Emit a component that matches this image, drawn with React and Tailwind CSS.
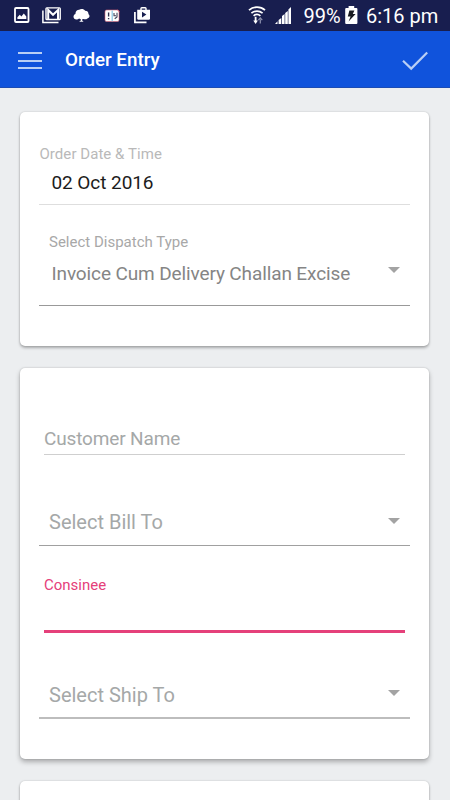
import React from "react";

function StatusBar() {
  return (
    <div className="flex h-[31px] shrink-0 items-start bg-[#181e4f] text-white">
      {/* Notifications */}
      <svg className="ml-[14px] mt-[7px] h-4 w-4 shrink-0" viewBox="0 0 16 16" fill="none">
        <rect x="1" y="1" width="13.5" height="14" rx="1" stroke="currentColor" strokeWidth="1.8" />
        <path d="M3.4 12 V10.2 L5.8 7.8 L7.4 9.4 L9.8 6.4 L12.3 9.6 V12 Z" fill="currentColor" />
      </svg>
      <svg className="ml-3 mt-[7px] h-[17px] w-[19px] shrink-0" viewBox="0 0 19 17" fill="none" stroke="currentColor">
        <path d="M0.9 3.5 V15.6 H16.5" strokeWidth="1.5" />
        <rect x="4" y="0.9" width="14.2" height="11.6" rx="0.8" strokeWidth="1.4" />
        <path d="M6.2 12.5 V3 L11 7.8 L16 3 V12.5" strokeWidth="2" />
      </svg>
      <svg className="ml-3 mt-[9px] h-[14px] w-[17px] shrink-0" viewBox="0 0 17 14" fill="currentColor">
        <path d="M3.5 10.5 C1.7 10.5 0.5 9.4 0.5 7.8 C0.5 6.4 1.4 5.4 2.5 5.1 C2.2 2.6 4 0.8 6.1 0.8 C8.1 -0.5 11.1 0 12.1 1.8 C14.3 1.7 15.7 3.3 15.4 5 C17.2 6.2 16.8 9.2 14.4 9.5 C13.2 10.6 11.5 10.4 10.5 10 L9.2 10.2 V11.5 L10.6 12.8 H6.1 L7.8 11.5 V10.3 L6 9.4 C5.3 10.2 4.4 10.5 3.5 10.5 Z" />
      </svg>
      <svg className="ml-[14px] mt-[8px] h-[15px] w-[17px] shrink-0" viewBox="0 0 17 15">
        <rect x="1" y="2" width="14" height="11.5" rx="1.6" fill="#fff" stroke="#d86478" strokeWidth="0.6" />
        <path d="M8.2 2.4 V13.2" stroke="#8fc9e6" strokeWidth="1.3" />
        <path d="M4.6 4.4 V8.5 M4.6 10 V11.2" stroke="#33334f" strokeWidth="1.4" />
        <path d="M10 5 V7.8 H12 M13 4.7 V9 L10.7 10.8" fill="none" stroke="#44445c" strokeWidth="1.1" />
        <path d="M13.5 2 L15.6 3.8" stroke="#df5270" strokeWidth="1" />
      </svg>
      <svg className="ml-[13px] mt-[7px] h-[17px] w-[17px] shrink-0" viewBox="0 0 17 17">
        <path d="M0.9 5 V15.3 H12.5" fill="none" stroke="currentColor" strokeWidth="1.7" />
        <path d="M7 3 V1.6 Q7 0.8 7.8 0.8 H11.2 Q12 0.8 12 1.6 V3" fill="none" stroke="currentColor" strokeWidth="1.4" />
        <path d="M3.2 2.8 H16 V11.6 Q16 12.8 14.8 12.8 H4.4 Q3.2 12.8 3.2 11.6 Z" fill="currentColor" />
        <path d="M8 4.8 L12.4 7.6 L8 10.6 Z" fill="#181e4f" />
      </svg>

      {/* Connectivity, battery and clock */}
      <svg className="ml-[97px] mt-[6px] h-[19px] w-[18px] shrink-0" viewBox="0 0 18 19" fill="none" stroke="currentColor">
        <path d="M1 4.2 C5.5 0.1 12.5 0.1 17 4.2" strokeWidth="1.8" />
        <path d="M3.4 7.2 C6.6 4.3 11.4 4.3 14.6 7.2" strokeWidth="1.7" />
        <path d="M5.6 9.9 C7.6 8 10.4 8 12.4 9.9" strokeWidth="1.6" />
        <path d="M7.6 10.8 V16" strokeWidth="1.8" />
        <path d="M5.3 14.4 H9.9 L7.6 18 Z" fill="currentColor" stroke="none" />
        <path d="M12.3 17.5 V13.4 M10.3 14.2 L12.3 12 L14.3 14.2" stroke="#8d91ad" strokeWidth="1.2" />
      </svg>
      <svg className="ml-[8px] mt-[7px] h-[17px] w-[18px] shrink-0" viewBox="0 0 18 17" fill="currentColor">
        <path d="M1 17 L3.5 14.2 V17 Z M4.6 13 L7.3 11 V17 H4.6 Z M8 9 L10.6 7 V17 H8 Z M11.2 6 L13.8 4 V17 H11.2 Z M14.4 2.4 L17 0 V17 H14.4 Z" />
      </svg>
      <span className="ml-[11.5px] mt-[4px] w-[41.5px] shrink-0 whitespace-nowrap text-[20px] leading-[24px]">99%</span>
      <svg className="mt-[6px] h-[18px] w-[13px] shrink-0" viewBox="0 0 13 18">
        <path d="M1.2 2 H3.6 V0 H9.2 V2 H11.4 Q12.4 2 12.4 3 V17 Q12.4 18 11.4 18 H1.2 Q0.2 18 0.2 17 V3 Q0.2 2 1.2 2 Z" fill="#fff" />
        <path d="M4.4 4.6 H9.4 L7.8 8 H10.6 L3.6 15.5 L5.6 10.4 H2.8 Z" fill="#181a20" />
      </svg>
      <span className="ml-[8px] mt-[4px] shrink-0 whitespace-nowrap text-[20px] leading-[24px]">6:16 pm</span>
    </div>
  );
}

function AppBar() {
  return (
    <header className="flex h-[57px] shrink-0 items-center border-b border-[#1c4cb4] bg-[#1053dc] pt-[3px]">
      <div className="ml-[18px] flex h-[17px] w-6 flex-col justify-between">
        <span className="h-[2px] bg-[#b9cff5]" />
        <span className="h-[2px] bg-[#b9cff5]" />
        <span className="h-[2px] bg-[#b9cff5]" />
      </div>
      <h1 className="ml-[23px] text-[18.8px] font-medium text-white">Order Entry</h1>
      <svg className="ml-auto mr-[22px] h-5 w-[26px]" viewBox="0 0 26 20" fill="none">
        <path d="M1 9.8 L9.2 17.6 L25.2 1.4" stroke="#b9cff5" strokeWidth="2.2" />
      </svg>
    </header>
  );
}

function Card({ className, children }) {
  return (
    <section className={"ml-[20px] mr-[21px] shrink-0 rounded-[5px] bg-white px-[19px] " + className}>
      {children}
    </section>
  );
}

function Caret() {
  return (
    <svg className="mr-[10px] h-[6px] w-3 shrink-0" viewBox="0 0 12 6" fill="#a3a3a3">
      <path d="M0 0 H12 L6 6 Z" />
    </svg>
  );
}

function SelectField({ label, className }) {
  return (
    <div className={"flex items-center justify-between pl-[10px] " + className}>
      <span className="text-[20px] leading-6 text-[#a5a8a8]">{label}</span>
      <div className="pb-[3px]">
        <Caret />
      </div>
    </div>
  );
}

export default function App() {
  return (
    <div className="flex h-[800px] w-[450px] flex-col overflow-hidden bg-[#eceef0] font-['Roboto',sans-serif]">
      <StatusBar />
      <AppBar />

      <main className="flex flex-col gap-[22px] pt-6">
        <Card className="h-[234px] pt-[32px] shadow-[0_2px_3px_rgba(0,0,0,0.28),0_0_2px_rgba(0,0,0,0.18)]">
          <p className="pl-[0.5px] text-[15px] leading-5 tracking-[0.05px] text-[#b9b9b9]">Order Date &amp; Time</p>
          <div className="h-[41px] border-b border-[#dedede] pl-[12.5px] pt-[7px] text-[19px] leading-6 tracking-[-0.07px] text-[#1c1c1c]">
            02 Oct 2016
          </div>
          <p className="mt-[27px] pl-[10px] text-[15px] leading-5 text-[#a8a8a8]">Select Dispatch Type</p>
          <div className="flex h-[54px] items-start justify-between border-b border-[#999] pl-[12.5px] pt-[10px]">
            <span className="whitespace-nowrap text-[19px] leading-6 tracking-[-0.12px] text-[#858585]">
              Invoice Cum Delivery Challan Excise
            </span>
            <div className="flex pt-[5px]">
              <Caret />
            </div>
          </div>
        </Card>

        <Card className="h-[391px] pt-[58px] shadow-[0_3px_5px_rgba(0,0,0,0.28),0_0_2px_rgba(0,0,0,0.2)]">
          <div className="mx-[5px] h-[29px] border-b border-[#cfcfcf] pt-px text-[19px] leading-6 tracking-[-0.15px] text-[#a5a8a8]">
            Customer Name
          </div>
          <SelectField label="Select Bill To" className="mt-[44px] h-[47px] border-b border-[#a0a0a0]" />
          <div className="mx-[5px] mt-[29px] h-[58px] border-b-[3px] border-[#e5407a] text-[15px] leading-5 text-[#e5407a]">
            Consinee
          </div>
          <SelectField label="Select Ship To" className="mt-[39px] h-[47px] border-b-2 border-[#bdbdbd]" />
        </Card>

        <Card className="h-[60px] shadow-[0_2px_3px_rgba(0,0,0,0.28),0_0_2px_rgba(0,0,0,0.18)]" />
      </main>
    </div>
  );
}
